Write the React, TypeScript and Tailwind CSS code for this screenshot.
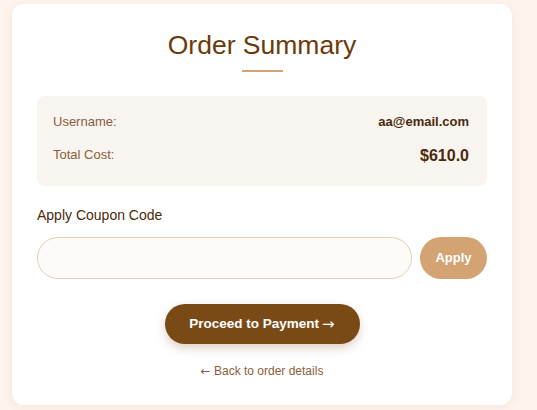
import React from "react";

export default function App() {
  return (
    <div
      className="w-[537px] h-[410px] overflow-hidden bg-[#fdf4ee] pt-[4px] pl-[12px]"
      style={{ fontFamily: '"Liberation Sans", Arial, sans-serif' }}
    >
      <div className="w-[500px] h-[401px] rounded-[12px] bg-white shadow-[0_2px_10px_rgba(160,110,60,0.10)] px-[25px] pt-[26px] flex flex-col">
        <h1 className="text-center text-[26.5px] leading-[30px] text-[#6b3a0a] font-normal">
          Order Summary
        </h1>
        <div className="mx-auto mt-[10px] w-[41px] h-[2px] bg-[#d4a373]" />

        <div className="mt-[24px] h-[90px] rounded-[8px] bg-[#f8f4ef] pl-[16px] pr-[18px] pt-[16px] flex flex-col gap-[12px]">
          <div className="flex items-center justify-between h-[20px]">
            <span className="text-[13px] text-[#8b5e3c]">Username:</span>
            <span className="text-[13px] font-bold text-[#4a2a0a]">aa@email.com</span>
          </div>
          <div className="flex items-center justify-between h-[24px]">
            <span className="text-[13px] text-[#8b5e3c] -mt-[3px]">Total Cost:</span>
            <span className="text-[16px] font-bold text-[#4a2a0a]">$610.0</span>
          </div>
        </div>

        <label className="mt-[19px] text-[14px] leading-[20px] text-[#4a2a0a]">
          Apply Coupon Code
        </label>
        <div className="mt-[12px] flex gap-[8px]">
          <input
            type="text"
            className="w-[375px] h-[42px] rounded-full border border-[#e3cfb8] bg-[#fdfbf8] px-[16px] text-[14px] outline-none"
          />
          <button className="w-[67px] h-[42px] rounded-full bg-[#d4a373] text-white text-[13px] font-semibold">
            Apply
          </button>
        </div>

        <div className="mt-[25px] flex justify-center">
          <button className="w-[195px] h-[40px] rounded-full bg-[#7a4a16] text-white text-[13.5px] font-bold shadow-[0_4px_10px_rgba(122,74,22,0.25)] flex items-center justify-center">
            <span>Proceed to Payment</span>
            <span className="ml-[3px] text-[15px]" style={{ fontFamily: '"DejaVu Sans", sans-serif', fontWeight: 400 }}>→</span>
          </button>
        </div>

        <div className="mt-[14px] text-center">
          <a className="text-[12px] text-[#8b5e3c]">
            <span style={{ fontFamily: '"DejaVu Sans", sans-serif' }}>←</span> Back to order details
          </a>
        </div>
      </div>
    </div>
  );
}
